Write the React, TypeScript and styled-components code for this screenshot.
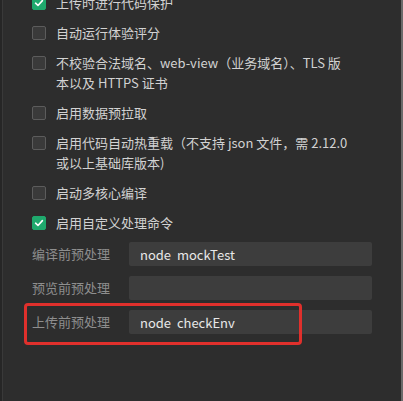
import React from "react";
import styled, { createGlobalStyle } from "styled-components";

const GlobalStyle = createGlobalStyle`
  html, body {
    margin: 0;
    padding: 0;
    background: #2d2d2d;
    overflow: hidden;
  }
  * { box-sizing: border-box; }
`;

const Frame = styled.div`
  width: 403px;
  height: 401px;
  display: flex;
  background: #2d2d2d;
  border-left: 2px solid #262626;
  overflow: hidden;
  font-family: "Noto Sans CJK SC", "Noto Sans", sans-serif;
`;

const Edge = styled.div`
  width: 1px;
  flex: none;
  background: #393939;
`;

const Panel = styled.div`
  flex: 1;
  display: flex;
  flex-direction: column;
  padding-left: 29px;
`;

const ScrollStrip = styled.div`
  width: 2px;
  flex: none;
  background: #6a6a6a;
`;

const OptionList = styled.div`
  margin-top: -7px;
  display: flex;
  flex-direction: column;
  gap: 10px;
`;

const OptionRow = styled.div`
  display: flex;
  align-items: flex-start;
  gap: 10px;
`;

const Box = styled.span<{ $checked?: boolean }>`
  width: 14px;
  height: 14px;
  margin-top: 3px;
  flex: none;
  border-radius: 2px;
  display: flex;
  align-items: center;
  justify-content: center;
  background: ${(p) => (p.$checked ? "#1fa96d" : "#3a3a3a")};
  border: 1px solid ${(p) => (p.$checked ? "#1fa96d" : "#5c5c5c")};
`;

const OptionText = styled.span`
  font-size: 13px;
  line-height: 20px;
  color: #d2d2d2;
  white-space: nowrap;
`;

const CommandList = styled.div`
  margin-top: 9px;
  display: flex;
  flex-direction: column;
  gap: 10px;
`;

const CommandRow = styled.div`
  position: relative;
  display: flex;
  align-items: center;
`;

const CommandLabel = styled.span`
  width: 97px;
  flex: none;
  font-size: 13px;
  line-height: 24px;
  color: #8e8e8e;
  white-space: nowrap;
`;

const CommandInput = styled.input`
  width: 243px;
  height: 24px;
  border: none;
  outline: none;
  border-radius: 2px;
  background: #3d3d3d;
  padding: 0 11px;
  font-family: "Noto Sans CJK SC", "Noto Sans", sans-serif;
  font-size: 13px;
  color: #e8e8e8;
  white-space: pre;
`;

const Highlight = styled.div`
  position: absolute;
  left: -8px;
  top: -7px;
  width: 278px;
  height: 42px;
  border: 3px solid #e0302c;
  border-radius: 4px;
  pointer-events: none;
`;

const Check = () => (
  <svg width="10" height="10" viewBox="0 0 10 10" fill="none">
    <path d="M1.6 5.2 L4 7.5 L8.4 2.6" stroke="#ffffff" strokeWidth="1.6" strokeLinecap="round" strokeLinejoin="round" />
  </svg>
);

type Option = { checked: boolean; lines: string[] };

const options: Option[] = [
  { checked: true, lines: ["上传时进行代码保护"] },
  { checked: false, lines: ["自动运行体验评分"] },
  { checked: false, lines: ["不校验合法域名、web-view（业务域名）、TLS 版", "本以及 HTTPS 证书"] },
  { checked: false, lines: ["启用数据预拉取"] },
  { checked: false, lines: ["启用代码自动热重载（不支持 json 文件，需 2.12.0", "或以上基础库版本)"] },
  { checked: false, lines: ["启动多核心编译"] },
  { checked: true, lines: ["启用自定义处理命令"] },
];

const commands = [
  { label: "编译前预处理", value: "node  mockTest", marked: false },
  { label: "预览前预处理", value: "", marked: false },
  { label: "上传前预处理", value: "node  checkEnv", marked: true },
];

export default function App() {
  return (
    <>
      <GlobalStyle />
      <Frame>
        <Edge />
        <Panel>
          <OptionList>
            {options.map((o, i) => (
              <OptionRow key={i}>
                <Box $checked={o.checked}>{o.checked && <Check />}</Box>
                <OptionText>
                  {o.lines.map((l, j) => (
                    <React.Fragment key={j}>
                      {j > 0 && <br />}
                      {l}
                    </React.Fragment>
                  ))}
                </OptionText>
              </OptionRow>
            ))}
          </OptionList>
          <CommandList>
            {commands.map((c) => (
              <CommandRow key={c.label}>
                <CommandLabel>{c.label}</CommandLabel>
                <CommandInput readOnly value={c.value} />
                {c.marked && <Highlight />}
              </CommandRow>
            ))}
          </CommandList>
        </Panel>
        <ScrollStrip />
      </Frame>
    </>
  );
}
